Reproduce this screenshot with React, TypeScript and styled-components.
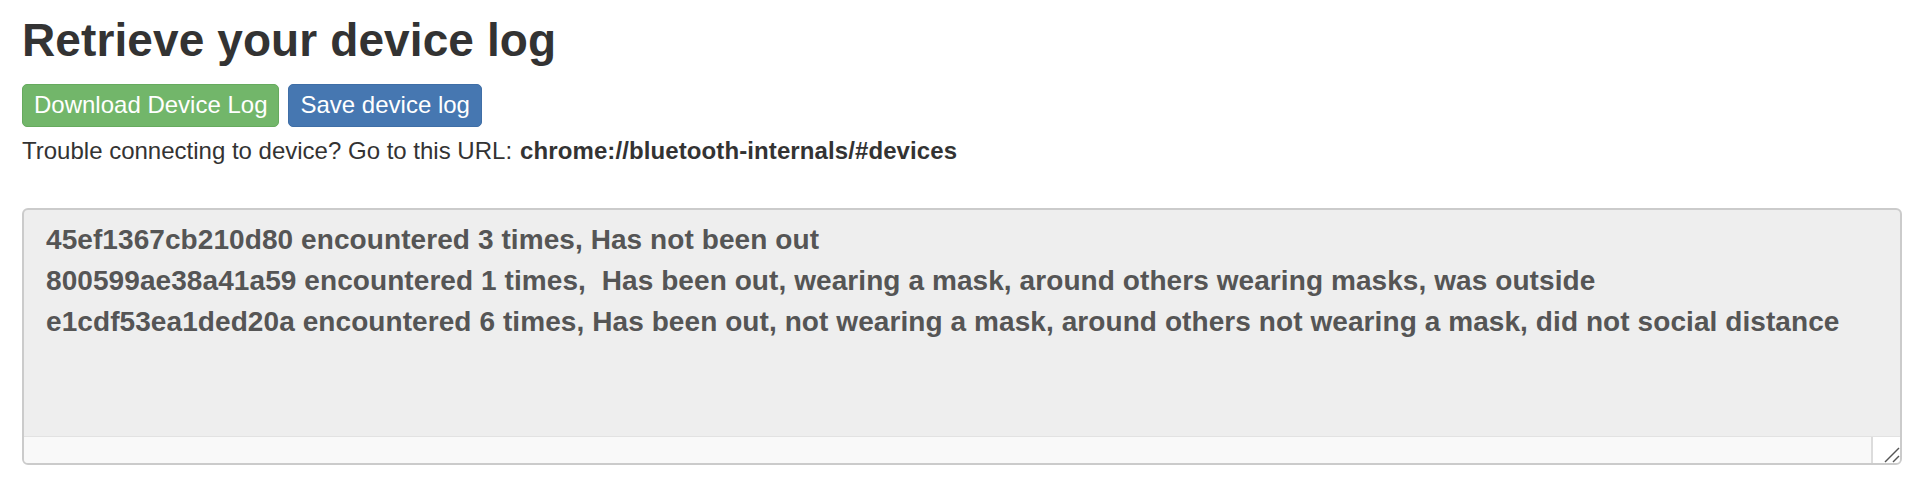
import React from "react";
import styled, { createGlobalStyle } from "styled-components";

const GlobalStyle = createGlobalStyle`
  html, body { margin: 0; padding: 0; background: #fff; }
  body { font-family: "Liberation Sans", Arial, Helvetica, sans-serif; color: #333; }
  * { box-sizing: border-box; }
`;

const Page = styled.div`
  padding: 15px 0 0 22px;
  width: 1902px;
`;

const Title = styled.h1`
  margin: 0;
  font-size: 46px;
  line-height: 1.1;
  font-weight: 700;
  letter-spacing: 0.1px;
  color: #333;
`;

const Toolbar = styled.div`
  display: flex;
  gap: 9px;
  margin-top: 18px;
`;

const Button = styled.button<{ $variant: "success" | "primary" }>`
  height: 43px;
  padding: 0 11px;
  border-radius: 5px;
  font-family: "Liberation Sans", Arial, sans-serif;
  font-size: 24px;
  color: #fff;
  cursor: pointer;
  background: ${(p) => (p.$variant === "success" ? "#72b66a" : "#4677b1")};
  border: 1px solid ${(p) => (p.$variant === "success" ? "#66aa5e" : "#3f6ea6")};
`;

const Hint = styled.p`
  margin: 7px 0 0;
  font-size: 24px;
  line-height: 34px;
  color: #333;
`;

const Url = styled.strong`
  font-weight: 700;
  margin-left: 8px;
  letter-spacing: 0.1px;
`;

const LogBox = styled.div`
  margin-top: 40px;
  width: 1880px;
  height: 257px;
  border: 2px solid #cbcbcb;
  border-radius: 6px;
  background: #eee;
  display: flex;
  flex-direction: column;
  overflow: hidden;
`;

const LogText = styled.div`
  flex: 1;
  padding: 9px 21px 0 22px;
  font-size: 28px;
  line-height: 41px;
  font-weight: 700;
  letter-spacing: 0.08px;
  color: #555;
  white-space: pre;
  overflow: hidden;
`;

const ScrollRow = styled.div`
  display: flex;
  height: 27px;
  border-top: 1px solid #e2e2e2;
`;

const Track = styled.div`
  flex: 1;
  background: #f9f9f9;
`;

const Corner = styled.div`
  width: 29px;
  background: #fff;
  border-left: 2px solid #dcdcdc;
  display: flex;
  align-items: flex-end;
  justify-content: flex-end;
`;

const Grip = () => (
  <svg width="16" height="16" viewBox="0 0 16 16">
    <line x1="1" y1="15" x2="15" y2="1" stroke="#555" strokeWidth="1.4" />
    <line x1="9" y1="15" x2="15" y2="9" stroke="#555" strokeWidth="1.4" />
  </svg>
);

const lines = [
  "45ef1367cb210d80 encountered 3 times, Has not been out",
  "800599ae38a41a59 encountered 1 times,  Has been out, wearing a mask, around others wearing masks, was outside",
  "e1cdf53ea1ded20a encountered 6 times, Has been out, not wearing a mask, around others not wearing a mask, did not social distance",
];

export default function App() {
  return (
    <>
      <GlobalStyle />
      <Page>
        <Title>Retrieve your device log</Title>
        <Toolbar>
          <Button $variant="success">Download Device Log</Button>
          <Button $variant="primary">Save device log</Button>
        </Toolbar>
        <Hint>
          Trouble connecting to device? Go to this URL:
          <Url>chrome://bluetooth-internals/#devices</Url>
        </Hint>
        <LogBox>
          <LogText>{lines.join("\n")}</LogText>
          <ScrollRow>
            <Track />
            <Corner>
              <Grip />
            </Corner>
          </ScrollRow>
        </LogBox>
      </Page>
    </>
  );
}
